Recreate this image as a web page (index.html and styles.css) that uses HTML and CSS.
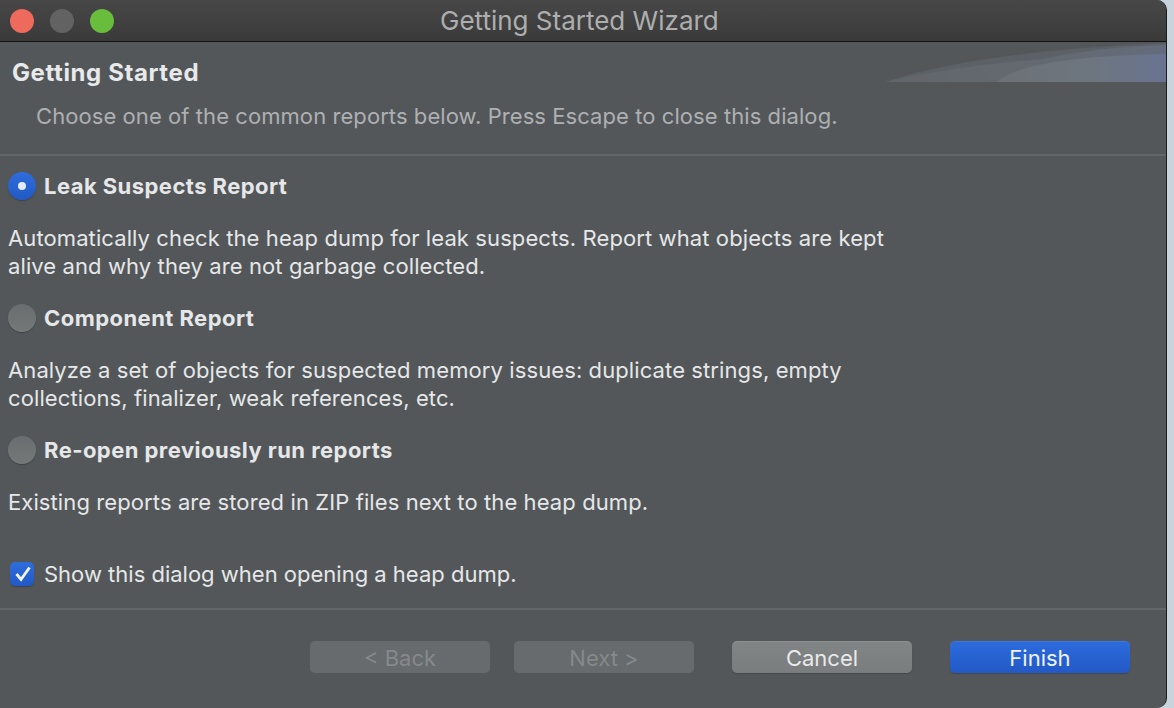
FILE: index.html
```html
<!DOCTYPE html>
<html>
<head>
    <meta charset="utf-8">
    <title>Getting Started Wizard</title>
    <link rel="stylesheet" href="styles.css">
</head>
<body>
<div class="window">
    <div class="titlebar">
        <div class="lights">
            <span class="light red"></span>
            <span class="light gray"></span>
            <span class="light green"></span>
        </div>
        <div class="title">Getting Started Wizard</div>
    </div>
    <div class="header">
        <svg class="swoosh" width="281" height="40" viewBox="0 0 281 40">
            <defs>
                <linearGradient id="band" x1="0" x2="1" y1="0" y2="0">
                    <stop offset="0" stop-color="#62666b"/>
                    <stop offset="0.6" stop-color="#646a71"/>
                    <stop offset="1" stop-color="#636c7c"/>
                </linearGradient>
                <linearGradient id="fade" x1="0" x2="1" y1="0" y2="0">
                    <stop offset="0" stop-color="#6d7176"/>
                    <stop offset="0.6" stop-color="#6d7680"/>
                    <stop offset="1" stop-color="#697391"/>
                </linearGradient>
            </defs>
            <path d="M0 40C50 23 130 8 281 1V40Z" fill="#5b6167"/>
            <path d="M0 40C50 28 110 21 158 17C185 11 230 4 281 3V40Z" fill="url(#band)"/>
            <path d="M112 40C132 22 190 14 281 12V40Z" fill="url(#fade)"/>
        </svg>
        <h1>Getting Started</h1>
        <p class="intro">Choose one of the common reports below. Press Escape to close this dialog.</p>
    </div>
    <div class="reports">
        <div class="report">
            <label class="option"><span class="radio on"></span>Leak Suspects Report</label>
            <p>Automatically check the heap dump for leak suspects. Report what objects are kept<br>alive and why they are not garbage collected.</p>
        </div>
        <div class="report">
            <label class="option"><span class="radio"></span>Component Report</label>
            <p>Analyze a set of objects for suspected memory issues: duplicate strings, empty<br>collections, finalizer, weak references, etc.</p>
        </div>
        <div class="report">
            <label class="option"><span class="radio"></span>Re-open previously run reports</label>
            <p>Existing reports are stored in ZIP files next to the heap dump.</p>
        </div>
        <label class="show">
            <span class="check">
                <svg width="24" height="24" viewBox="0 0 24 24"><path d="M6.5 12L11 17.5L19.5 5.5" fill="none" stroke="#f2f5fb" stroke-width="2.8"/></svg>
            </span>
            Show this dialog when opening a heap dump.
        </label>
    </div>
    <div class="buttons">
        <button class="btn" disabled>&lt; Back</button>
        <button class="btn" disabled>Next &gt;</button>
        <button class="btn cancel">Cancel</button>
        <button class="btn finish">Finish</button>
    </div>
</div>
</body>
</html>
```

FILE: styles.css
```css
html, body {
    margin: 0;
    height: 100%;
}

body {
    background: #c9d3dc;
    font-family: Inter, "Liberation Sans", sans-serif;
    font-size: 22px;
    overflow: hidden;
}

.window {
    width: 1166px;
    height: 708px;
    background: #53575a;
    border-right: 1px solid #1c1c1c;
    border-radius: 0 10px 10px 0;
    overflow: hidden;
    color: #e6e7e8;
}

.titlebar {
    height: 41px;
    display: flex;
    align-items: center;
    position: relative;
    background: linear-gradient(#474747, #3a3a3a);
    border-bottom: 1px solid #111;
}

.lights {
    display: flex;
    gap: 16px;
    padding-left: 10px;
}

.light {
    width: 24px;
    height: 24px;
    border-radius: 50%;
}

.red { background: #ee6a5d; }
.gray { background: #626262; }
.green { background: #68bd3d; }

.title {
    position: absolute;
    left: 440px;
    font-size: 26px;
    color: #aeaeae;
}

.header {
    height: 112px;
    position: relative;
    border-bottom: 2px solid #626668;
}

.swoosh {
    position: absolute;
    top: 0;
    right: 0;
}

h1 {
    margin: 0;
    padding: 17px 0 0 12px;
    font-size: 24px;
    line-height: 28px;
    font-weight: 700;
    letter-spacing: 0.6px;
    color: #e8e9ea;
}

.intro {
    margin: 0;
    padding: 15px 0 0 36px;
    line-height: 28px;
    letter-spacing: 0.07px;
    color: #aeb0b2;
}

.reports {
    height: 452px;
    border-bottom: 2px solid #626668;
    padding-left: 8px;
}

.report {
    padding-top: 16px;
    height: 116px;
}

.option {
    display: flex;
    align-items: center;
    gap: 8px;
    height: 28px;
    font-weight: 700;
    letter-spacing: 0.45px;
}

.report p {
    margin: 24px 0 0;
    line-height: 28px;
    letter-spacing: 0.1px;
}

.radio {
    width: 28px;
    height: 28px;
    border-radius: 50%;
    background: linear-gradient(#6a6d6f, #747878);
    box-shadow: 0 1px 1px #3f4345;
    display: flex;
    align-items: center;
    justify-content: center;
}

.radio.on {
    background: linear-gradient(#2f6ddc, #2159c4);
}

.radio.on::after {
    content: "";
    width: 8px;
    height: 8px;
    border-radius: 50%;
    background: #e4ecfb;
}

.show {
    display: flex;
    align-items: center;
    gap: 10px;
    padding: 8px 0 0 2px;
    height: 28px;
}

.check {
    width: 24px;
    height: 24px;
    border-radius: 5px;
    background: linear-gradient(#2f6ddc, #2159c4);
    box-shadow: 0 1px 1px #3f4345;
}

.check svg {
    display: block;
}

.buttons {
    display: flex;
    padding: 31px 36px 0 0;
    justify-content: flex-end;
}

.btn {
    width: 180px;
    height: 32px;
    margin-left: 24px;
    border: 0;
    border-radius: 5px;
    font: inherit;
    padding: 1px 0 0;
    color: #e8e9ea;
    box-shadow: inset 0 1px 0 rgba(255, 255, 255, 0.08), 0 1px 1px #45494b;
}

.btn:disabled {
    background: #676b6d;
    color: #85898b;
    box-shadow: none;
}

.cancel {
    margin-left: 38px;
    background: linear-gradient(#828585, #7a7d7e);
}

.finish {
    margin-left: 38px;
    background: linear-gradient(#2c6bdd, #2359c6);
    color: #eef2fb;
}
```
